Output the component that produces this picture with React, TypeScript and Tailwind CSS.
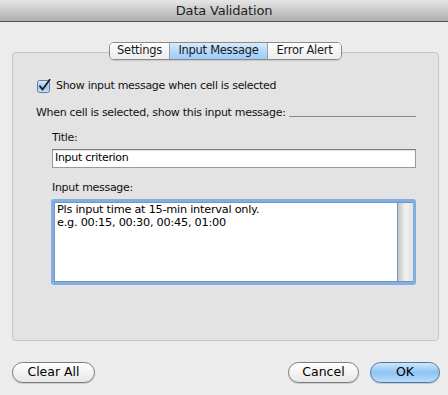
import React from 'react';

const font = { fontFamily: '"Lucida Grande", "DejaVu Sans", sans-serif' };

function CheckBox() {
  return (
    <svg width="14" height="14" viewBox="0 0 14 14" className="shrink-0">
      <defs>
        <linearGradient id="cb" x1="0" y1="0" x2="0" y2="1">
          <stop offset="0" stopColor="#dcebfa" />
          <stop offset="0.5" stopColor="#9ec5ee" />
          <stop offset="1" stopColor="#c9e1f9" />
        </linearGradient>
      </defs>
      <rect x="0.5" y="1.5" width="12" height="12" rx="2" fill="url(#cb)" stroke="#5b7fa8" />
      <path d="M3 7.2 L5.6 10.6 L12.6 0.8" fill="none" stroke="#1c1c1c" strokeWidth="1.8" strokeLinecap="round" strokeLinejoin="round" />
    </svg>
  );
}

function Tab({ label, active, first, last }: { label: string; active?: boolean; first?: boolean; last?: boolean }) {
  return (
    <div
      className={`flex items-center justify-center h-full text-[11.5px] tracking-[-0.3px] text-[#1a1a1a] ${
        active ? 'bg-gradient-to-b from-[#d8ecfd] via-[#b4d9fb] to-[#9ccdfa]' : 'bg-gradient-to-b from-white to-[#ececec]'
      } ${first ? 'rounded-l-[4px] w-[59px]' : ''} ${last ? 'rounded-r-[4px] w-[73px]' : ''} ${!first && !last ? 'w-[99px] border-x border-[#a0a0a0]' : ''}`}
    >
      {label}
    </div>
  );
}

function PillButton({ label, primary, width }: { label: string; primary?: boolean; width: string }) {
  return (
    <div
      className={`${width} h-[21px] rounded-full border flex items-center justify-center text-[12.5px] shadow-[0_1px_1px_rgba(0,0,0,0.15)] ${
        primary
          ? 'border-[#4f76a8] bg-gradient-to-b from-[#cfe6fb] via-[#8ec3f2] to-[#b9dcfb] text-black'
          : 'border-[#7c7c7c] bg-gradient-to-b from-white via-[#f3f3f3] to-[#e6e6e6] text-black'
      }`}
    >
      {label}
    </div>
  );
}

export default function App() {
  return (
    <div className="w-[448px] h-[395px] bg-[#ececec] overflow-hidden" style={font}>
      {/* title bar */}
      <div className="h-[22px] bg-gradient-to-b from-[#e6e6e6] to-[#aeaeae] border-b border-[#555] flex items-center justify-center">
        <span className="text-[13px] tracking-[-0.2px] text-[#1e1e1e]">Data Validation</span>
      </div>

      <div className="px-[12px] pt-[30px]">
        {/* group box */}
        <div className="w-[427px] h-[289px] border border-[#c5c5c5] rounded-[4px] bg-[#e3e3e3] pr-[22px] pl-[23px] text-[11px] tracking-[-0.3px]">
          <div className="-mt-[11px] flex justify-center -mr-[22px] -ml-[23px]">
            <div className="h-[18px] flex border border-[#8a8a8a] rounded-[5px] shadow-[0_1px_1px_rgba(0,0,0,0.12)]">
              <Tab label="Settings" first />
              <Tab label="Input Message" active />
              <Tab label="Error Alert" last />
            </div>
          </div>

          <div className="mt-[18px] h-[16px] flex items-center gap-[5px] pl-[1px]">
            <CheckBox />
            <span className="text-[#111]">Show input message when cell is selected</span>
          </div>

          <div className="mt-[11px] h-[16px] flex items-center gap-[3px]">
            <span className="text-[#111] whitespace-nowrap">When cell is selected, show this input message:</span>
            <div className="flex-1 h-px bg-[#8a8a8a] mt-[6px]" />
          </div>

          <div className="pl-[16px]">
            <div className="mt-[9px] h-[16px] flex items-center text-[#111]">Title:</div>
            <div className="mt-[3px] h-[19px] bg-white border border-[#9a9a9a] border-t-[#7a7a7a] shadow-[inset_0_1px_1px_rgba(0,0,0,0.12)] flex items-center px-[2px] text-black">
              Input criterion
            </div>

            <div className="mt-[12px] h-[16px] flex items-center text-[#111]">Input message:</div>
            <div className="mt-[3px] -ml-px h-[86px] rounded-[3px] border-[3px] border-[#82aee0] bg-white flex">
              <div className="flex-1 px-[2px] leading-[13px] text-[11.3px] tracking-[-0.25px] text-black border border-[#6f95c4]">
                <div>Pls input time at 15-min interval only.</div>
                <div>e.g. 00:15, 00:30, 00:45, 01:00</div>
              </div>
              <div className="w-[15px] bg-gradient-to-r from-[#c4c4c4] via-[#f2f2f2] to-[#e2e2e2] border-y border-[#6f95c4]" />
            </div>
          </div>
        </div>

        {/* buttons */}
        <div className="mt-[21px] -mr-[4px] flex items-center">
          <PillButton label="Clear All" width="w-[83px]" />
          <div className="flex-1" />
          <PillButton label="Cancel" width="w-[71px]" />
          <div className="w-[11px]" />
          <PillButton label="OK" primary width="w-[70px]" />
        </div>
      </div>
    </div>
  );
}
